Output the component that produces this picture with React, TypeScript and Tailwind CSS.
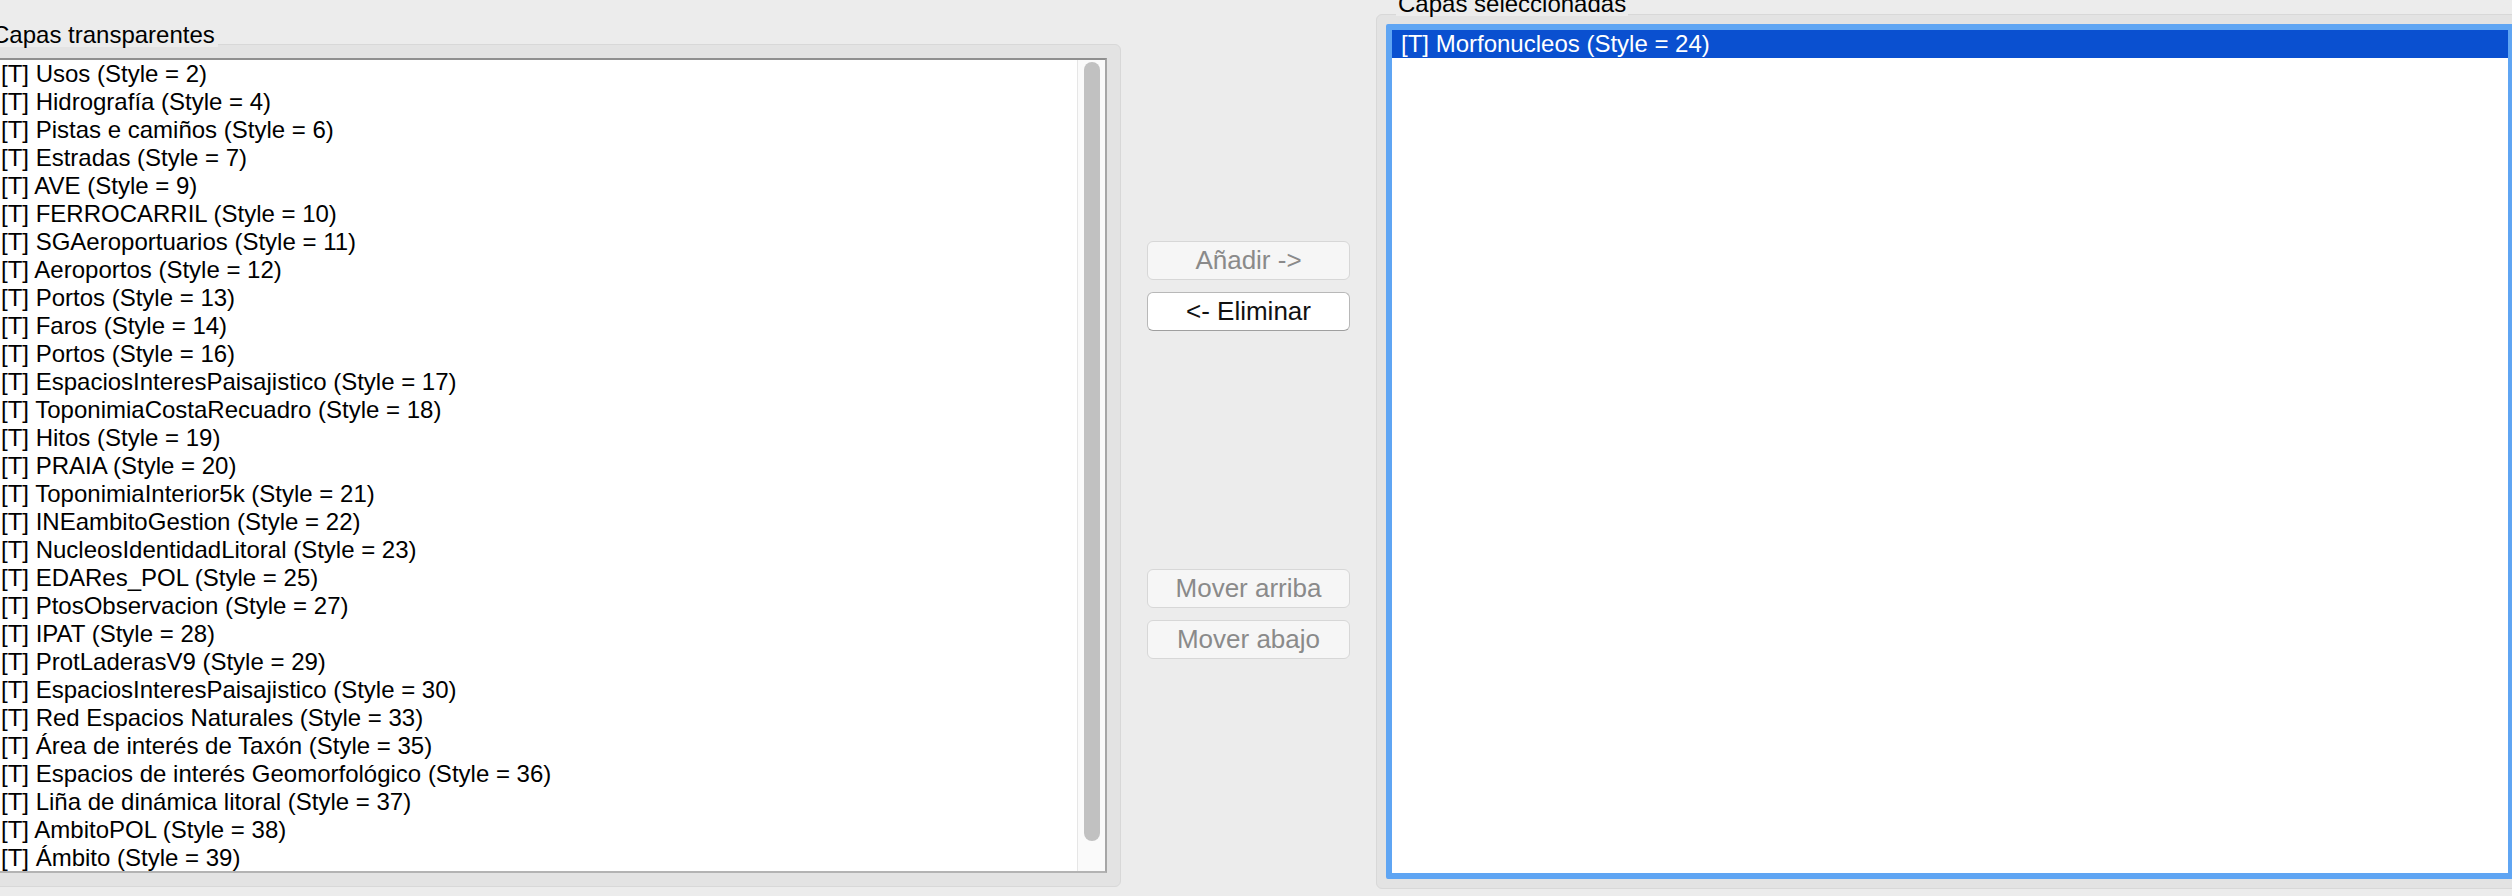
import React from "react";

const capas = [
  "Usos (Style = 2)",
  "Hidrografía (Style = 4)",
  "Pistas e camiños (Style = 6)",
  "Estradas (Style = 7)",
  "AVE (Style = 9)",
  "FERROCARRIL (Style = 10)",
  "SGAeroportuarios (Style = 11)",
  "Aeroportos (Style = 12)",
  "Portos (Style = 13)",
  "Faros (Style = 14)",
  "Portos (Style = 16)",
  "EspaciosInteresPaisajistico (Style = 17)",
  "ToponimiaCostaRecuadro (Style = 18)",
  "Hitos (Style = 19)",
  "PRAIA (Style = 20)",
  "ToponimiaInterior5k (Style = 21)",
  "INEambitoGestion (Style = 22)",
  "NucleosIdentidadLitoral (Style = 23)",
  "EDARes_POL (Style = 25)",
  "PtosObservacion (Style = 27)",
  "IPAT (Style = 28)",
  "ProtLaderasV9 (Style = 29)",
  "EspaciosInteresPaisajistico (Style = 30)",
  "Red Espacios Naturales (Style = 33)",
  "Área de interés de Taxón (Style = 35)",
  "Espacios de interés Geomorfológico (Style = 36)",
  "Liña de dinámica litoral (Style = 37)",
  "AmbitoPOL (Style = 38)",
  "Ámbito (Style = 39)",
];

const seleccionadas = ["Morfonucleos (Style = 24)"];

function PushButton({ label, disabled }: { label: string; disabled?: boolean }) {
  return (
    <button
      type="button"
      disabled={disabled}
      className={`h-[39px] w-[203px] rounded-[6px] border text-[26px] leading-[33px] ${
        disabled
          ? "border-[#d7d7d7] bg-[#f6f6f6] text-[#8a8a8a]"
          : "border-[#b8b8b8] border-b-[#9f9f9f] bg-white text-[#111]"
      }`}
    >
      {label}
    </button>
  );
}

export default function App() {
  return (
    <div className="flex h-[896px] w-[2512px] items-start overflow-hidden bg-[#ececec] font-['Liberation_Sans','Arial',sans-serif] text-black">
      {/* Capas transparentes */}
      <div className="ml-[-20px] flex w-[1141px] shrink-0 flex-col">
        <div className="relative z-10 mt-[23px] h-[24px] self-start bg-[#ececec] pl-[12px] pr-[3px] text-[24px] leading-[24px] whitespace-pre">
          Capas transparentes
        </div>
        <div className="mt-[-3px] flex h-[843px] flex-col rounded-[6px] border border-[#d8d8d8] bg-[#e3e3e3] px-[13px] pt-[13px] pb-[13px]">
          <div className="flex flex-1 overflow-hidden border-l border-t-2 border-r-2 border-b-2 border-l-[#b3b3b3] border-t-[#8f8f8f] border-r-[#a6a6a6] border-b-[#b3b3b3] bg-white">
            <div className="flex-1 overflow-hidden pl-[6px]">
              {capas.map((c, i) => (
                <div key={i} className="h-[28px] text-[24px] leading-[28px] whitespace-pre">
                  [T] {c}
                </div>
              ))}
            </div>
            <div className="w-[28px] shrink-0 border-l border-[#e6e6e6] bg-[#fafafa] pt-[2px] pl-[6px]">
              <div className="h-[779px] w-[16px] rounded-full bg-[#c1c1c1]" />
            </div>
          </div>
        </div>
      </div>

      {/* Botones */}
      <div className="flex w-[255px] shrink-0 flex-col items-center pt-[241px]">
        <PushButton label="Añadir ->" disabled />
        <div className="mt-[12px]">
          <PushButton label="<- Eliminar" />
        </div>
        <div className="mt-[238px]">
          <PushButton label="Mover arriba" disabled />
        </div>
        <div className="mt-[12px]">
          <PushButton label="Mover abajo" disabled />
        </div>
      </div>

      {/* Capas seleccionadas */}
      <div className="flex w-[1148px] shrink-0 flex-col">
        <div className="relative z-10 mt-[-8px] ml-[20px] h-[24px] self-start bg-[#ececec] px-[2px] text-[24px] leading-[24px] whitespace-pre">
          Capas seleccionadas
        </div>
        <div className="mt-[-2px] flex h-[875px] flex-col rounded-[6px] border border-[#d8d8d8] bg-[#e3e3e3] p-[9px]">
          <div className="flex-1 overflow-hidden rounded-[2px] border-[6px] border-[#5fa5f3] bg-white">
            {seleccionadas.map((c, i) => (
              <div key={i} className="h-[28px] bg-[#0a50d0] pl-[9px] text-[24px] leading-[28px] text-white whitespace-pre">
                [T] {c}
              </div>
            ))}
          </div>
        </div>
      </div>
    </div>
  );
}
